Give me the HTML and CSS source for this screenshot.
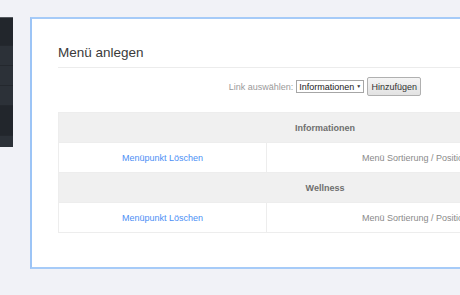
FILE: index.html
```html
<!DOCTYPE html>
<html>
    <head>
        <meta charset="utf-8">
        <title>Menü anlegen</title>
        <link rel="stylesheet" href="styles.css">
    </head>
    <body>
    <div class="page">
        <div class="sidebar">
            <div class="side-item dark tall"></div>
            <div class="side-item"></div>
            <div class="side-item"></div>
            <div class="side-item"></div>
            <div class="side-item dark taller"></div>
            <div class="side-item short"></div>
        </div>

        <div class="panel">
            <h2 class="panel-title">Menü anlegen</h2>

            <div class="link-row">
                <span class="link-label">Link auswählen:</span>
                <span class="select-wrap">
                    <select class="link-select">
                        <option>Informationen</option>
                        <option>Wellness</option>
                    </select>
                </span>
                <button class="btn-add">Hinzufügen</button>
            </div>

            <table class="menu-table">
                <tr class="group-row">
                    <th colspan="3">Informationen</th>
                </tr>
                <tr>
                    <td class="col-delete"><a href="#">Menüpunkt Löschen</a></td>
                    <td class="col-sort">Menü Sortierung / Position</td>
                    <td class="col-rest"></td>
                </tr>
                <tr class="group-row">
                    <th colspan="3">Wellness</th>
                </tr>
                <tr>
                    <td class="col-delete"><a href="#">Menüpunkt Löschen</a></td>
                    <td class="col-sort">Menü Sortierung / Position</td>
                    <td class="col-rest"></td>
                </tr>
            </table>
        </div>
    </div>
    </body>
</html>
```

FILE: styles.css
```css
html, body {
    margin: 0;
    padding: 0;
    height: 100%;
    overflow: hidden;
    background: #f1f2f7;
    font-family: "Liberation Sans", Arial, sans-serif;
}
.page {
    display: flex;
    align-items: flex-start;
    padding-top: 17px;
}
.sidebar {
    width: 13px;
    flex-shrink: 0;
    background: #2c3138;
    border-top: 1px solid #555a60;
}
.side-item {
    height: 19px;
    background: #2c3138;
    border-bottom: 1px solid #24282e;
}
.side-item.dark {
    background: #22262c;
}
.side-item.tall {
    height: 27px;
}
.side-item.taller {
    height: 29px;
}
.side-item.short {
    height: 11px;
    border-bottom: none;
}
.panel {
    flex-shrink: 0;
    width: 534px;
    margin-left: 17px;
    padding: 26px 26px 34px 26px;
    background: #fff;
    border: 2px solid #a6cbf8;
    border-left-color: #9cc4f6;
}
.panel-title {
    margin: 0;
    padding-bottom: 7px;
    font-size: 13.5px;
    font-weight: normal;
    color: #3a3a3a;
    border-bottom: 1px solid #ececec;
}
.link-row {
    display: flex;
    justify-content: center;
    align-items: center;
    margin-top: 9px;
    font-size: 9px;
}
.link-label {
    color: #9a9a9a;
    margin-right: 3px;
}
.select-wrap {
    position: relative;
    margin-right: 3px;
}
.select-wrap:after {
    content: "▼";
    position: absolute;
    right: 3px;
    top: 3px;
    font-size: 5px;
    color: #333;
    pointer-events: none;
}
.link-select {
    -webkit-appearance: none;
    appearance: none;
    width: 68px;
    height: 13px;
    margin: 0;
    padding: 0 0 0 2px;
    border: 1px solid #a6a6a6;
    border-radius: 0;
    background: #fff;
    font-family: inherit;
    font-size: 9px;
    color: #222;
}
.btn-add {
    width: 54px;
    height: 19px;
    padding: 0;
    border: 1px solid #b0b0b0;
    border-radius: 2px;
    background: linear-gradient(to bottom, #f5f5f5 0%, #e2e2e2 100%);
    font-family: inherit;
    font-size: 9px;
    color: #333;
}
.menu-table {
    width: 100%;
    margin-top: 16px;
    border-collapse: collapse;
    font-size: 9px;
}
.menu-table th,
.menu-table td {
    border: 1px solid #ededed;
    height: 29px;
    padding: 0;
    text-align: center;
}
.group-row th {
    background: #f0f0f0;
    color: #6e6e6e;
    font-weight: bold;
}
.col-delete {
    width: 207px;
}
.col-delete a {
    color: #4d8ff5;
    text-decoration: none;
}
.col-sort {
    width: 296px;
    color: #8a8a8a;
}
```
